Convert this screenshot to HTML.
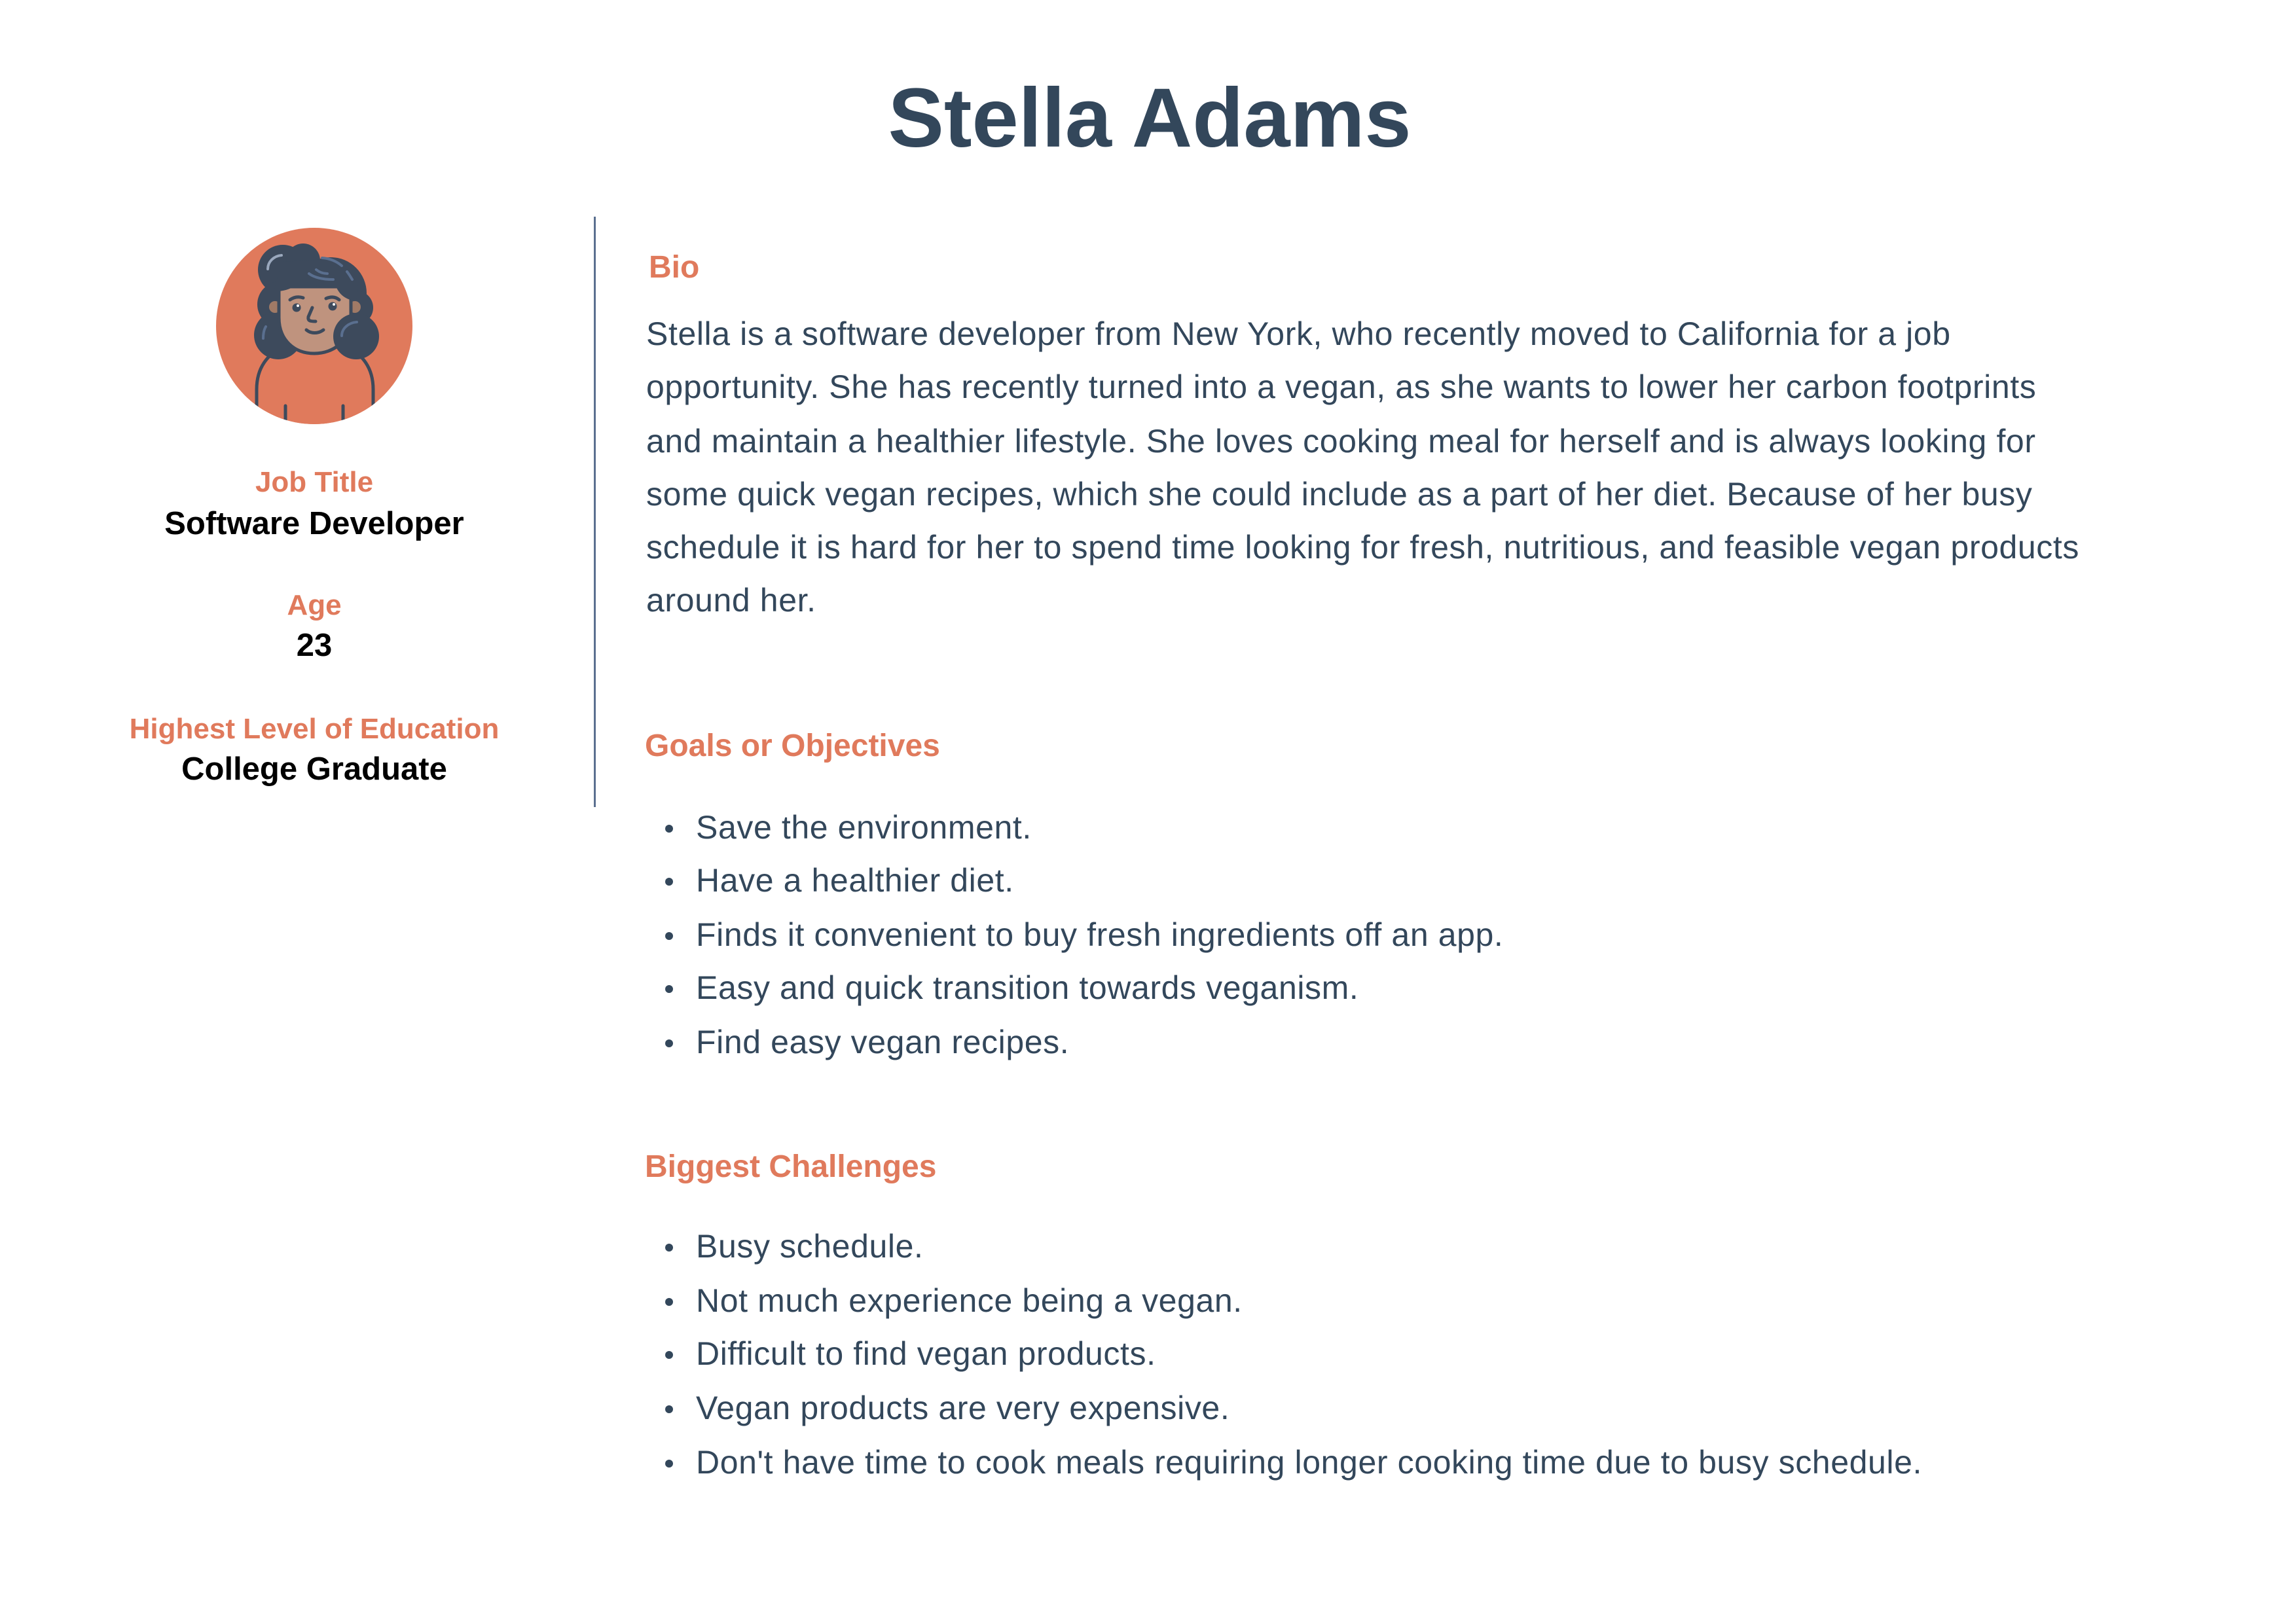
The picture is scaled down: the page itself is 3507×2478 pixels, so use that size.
<!DOCTYPE html>
<html><head><meta charset="utf-8">
<style>
html,body{margin:0;padding:0;background:#fff;}
body{width:3507px;height:2478px;position:relative;overflow:hidden;font-family:"Liberation Sans",sans-serif;color:#33475b;}
.t{position:absolute;line-height:1;white-space:nowrap;}
.c{left:0;width:960px;text-align:center;}
.lab{font-weight:bold;color:#e07a5c;font-size:44px;}
.val{font-weight:bold;color:#000;font-size:49px;}
.h{font-weight:bold;color:#e07a5c;font-size:48px;}
.b{font-size:50px;letter-spacing:0.6px;color:#33475b;}
.dot{position:absolute;width:12px;height:12px;border-radius:50%;background:#33475b;}
</style></head><body>
<div class="t" style="left:0;width:3512px;text-align:center;top:117px;font-size:128px;font-weight:bold;color:#33475b;">Stella Adams</div>

<svg style="position:absolute;left:300px;top:320px" width="360" height="360" viewBox="0 0 360 360">
<defs><clipPath id="cp"><circle cx="180" cy="178" r="150"/></clipPath></defs>
<circle cx="180" cy="178" r="150" fill="#e07a5c"/>
<g clip-path="url(#cp)">
<path d="M92,330 L92,275 C92,240 110,222 130,210 L232,210 C252,222 270,240 270,275 L270,330" fill="#e07a5c" stroke="#3d4a5c" stroke-width="5"/>
<line x1="136" y1="300" x2="136" y2="330" stroke="#3d4a5c" stroke-width="5" stroke-linecap="round"/>
<line x1="224" y1="300" x2="224" y2="330" stroke="#3d4a5c" stroke-width="5" stroke-linecap="round"/>
<g fill="#3d4a5c">
<circle cx="132" cy="92" r="38"/><circle cx="163" cy="78" r="26"/><circle cx="205" cy="128" r="55"/>
<circle cx="128" cy="145" r="35"/><circle cx="125" cy="192" r="37"/><circle cx="244" cy="150" r="26"/>
</g>
<circle cx="120" cy="149" r="9" fill="#a07a66"/><circle cx="242" cy="149" r="9" fill="#a07a66"/>
<path d="M126,118 L126,165 C126,200 150,220 180,220 C210,220 236,200 236,165 L236,118 Z" fill="#bf937e" stroke="#3d4a5c" stroke-width="5"/>
<path d="M118,125 C145,126 158,112 160,106 C178,118 196,121 213,117 C218,130 228,138 244,140 C252,110 240,85 215,75 L130,80 Z" fill="#3d4a5c"/>
<circle cx="244" cy="194" r="35" fill="#3d4a5c"/>
<g stroke="#3d4a5c" stroke-width="5" fill="none" stroke-linecap="round">
<path d="M143,138 C150,133 157,133 163,135"/><path d="M198,136 C205,133 212,133 218,138"/>
<path d="M177,150 L171,164 C170,170 173,171 182,171"/>
<path d="M168,184 C175,190 186,190 194,184"/>
</g>
<circle cx="153" cy="150" r="6.5" fill="#3d4a5c"/><circle cx="208" cy="148" r="6.5" fill="#3d4a5c"/>
<circle cx="155" cy="147" r="2" fill="#fff"/><circle cx="210" cy="145" r="2" fill="#fff"/>
<g stroke="#5a6f8f" stroke-width="4" fill="none" stroke-linecap="round">
<path d="M192,74 C205,75 215,80 222,86"/><path d="M230,95 C234,100 236,104 238,107"/>
<path d="M172,98 C180,104 192,107 209,107"/><path d="M183,92 C188,96 193,98 200,98"/>
<path d="M102,197 C102,189 103,184 106,179"/>
<path d="M222,193 C222,182 232,173 245,172"/>
</g>
<path d="M109,91 C109,80 118,71 130,70" stroke="#9aa8bd" stroke-width="4" fill="none" stroke-linecap="round"/>
</g>
</svg>

<div class="t c lab" style="top:715px">Job Title</div>
<div class="t c val" style="top:776px">Software Developer</div>
<div class="t c lab" style="top:903px">Age</div>
<div class="t c val" style="top:962px">23</div>
<div class="t c lab" style="top:1092px">Highest Level of Education</div>
<div class="t c val" style="top:1151px">College Graduate</div>

<div style="position:absolute;left:907px;top:331px;width:3px;height:902px;background:#5a6f8f"></div>

<div class="t h" style="left:991px;top:385px">Bio</div>
<div class="t b" style="left:987px;top:485px">Stella is a software developer from New York, who recently moved to California for a job</div>
<div class="t b" style="left:987px;top:566px">opportunity. She has recently turned into a vegan, as she wants to lower her carbon footprints</div>
<div class="t b" style="left:987px;top:649px">and maintain a healthier lifestyle. She loves cooking meal for herself and is always looking for</div>
<div class="t b" style="left:987px;top:730px">some quick vegan recipes, which she could include as a part of her diet. Because of her busy</div>
<div class="t b" style="left:987px;top:811px">schedule it is hard for her to spend time looking for fresh, nutritious, and feasible vegan products</div>
<div class="t b" style="left:987px;top:892px">around her.</div>

<div class="t h" style="left:985px;top:1116px">Goals or Objectives</div>
<div class="dot" style="left:1016px;top:1260px"></div><div class="t b" style="left:1063px;top:1239px">Save the environment.</div>
<div class="dot" style="left:1016px;top:1341px"></div><div class="t b" style="left:1063px;top:1320px">Have a healthier diet.</div>
<div class="dot" style="left:1016px;top:1424px"></div><div class="t b" style="left:1063px;top:1403px">Finds it convenient to buy fresh ingredients off an app.</div>
<div class="dot" style="left:1016px;top:1505px"></div><div class="t b" style="left:1063px;top:1484px">Easy and quick transition towards veganism.</div>
<div class="dot" style="left:1016px;top:1588px"></div><div class="t b" style="left:1063px;top:1567px">Find easy vegan recipes.</div>

<div class="t h" style="left:985px;top:1759px">Biggest Challenges</div>
<div class="dot" style="left:1016px;top:1900px"></div><div class="t b" style="left:1063px;top:1879px">Busy schedule.</div>
<div class="dot" style="left:1016px;top:1983px"></div><div class="t b" style="left:1063px;top:1962px">Not much experience being a vegan.</div>
<div class="dot" style="left:1016px;top:2064px"></div><div class="t b" style="left:1063px;top:2043px">Difficult to find vegan products.</div>
<div class="dot" style="left:1016px;top:2147px"></div><div class="t b" style="left:1063px;top:2126px">Vegan products are very expensive.</div>
<div class="dot" style="left:1016px;top:2230px"></div><div class="t b" style="left:1063px;top:2209px">Don't have time to cook meals requiring longer cooking time due to busy schedule.</div>
</body></html>
